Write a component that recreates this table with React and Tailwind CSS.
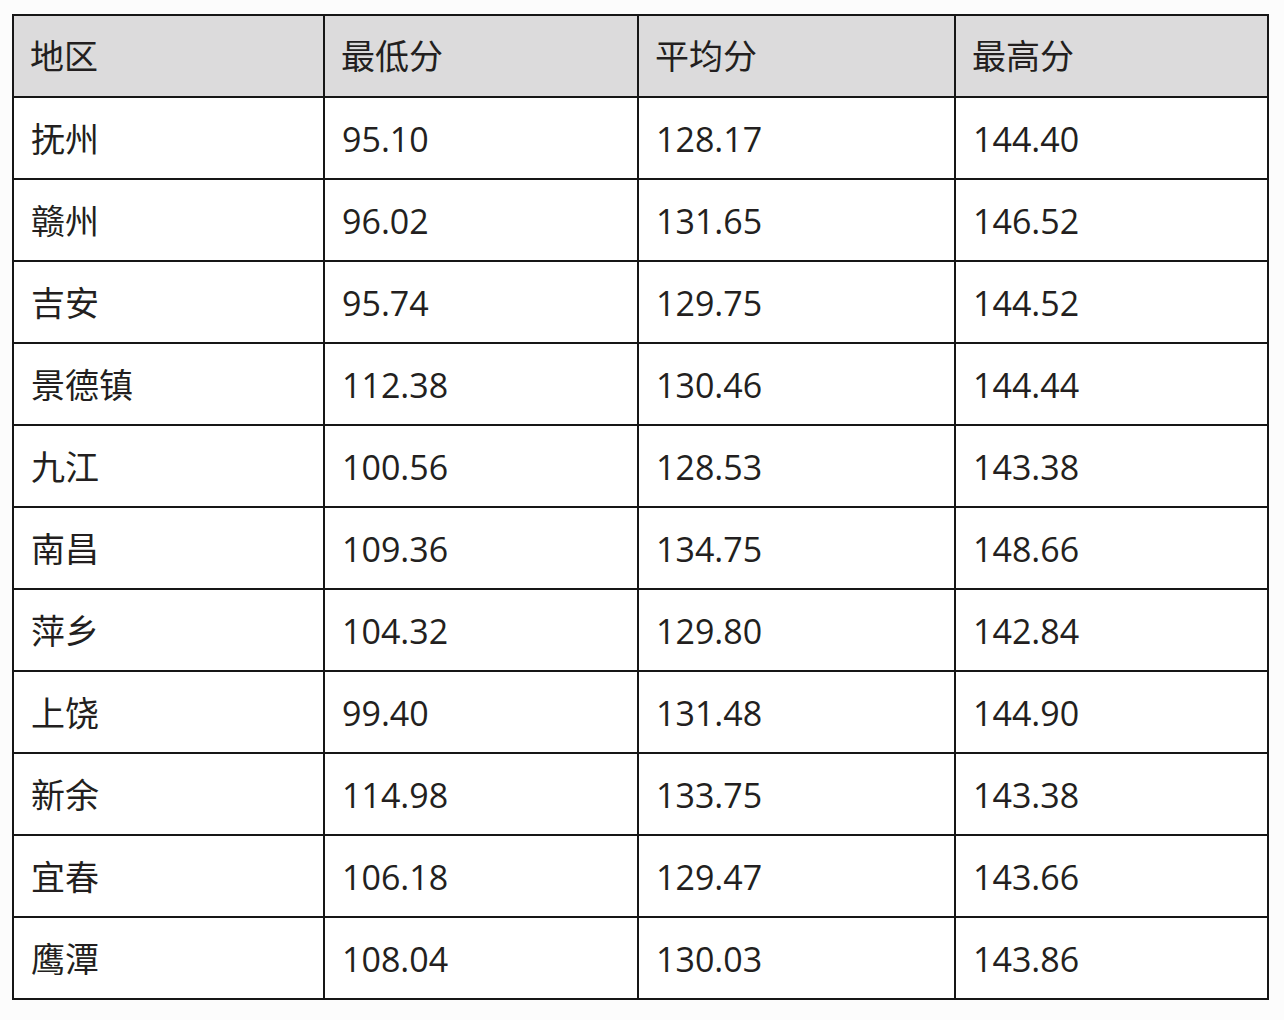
import React from 'react';

const rows = [
  ['抚州', '95.10', '128.17', '144.40'],
  ['赣州', '96.02', '131.65', '146.52'],
  ['吉安', '95.74', '129.75', '144.52'],
  ['景德镇', '112.38', '130.46', '144.44'],
  ['九江', '100.56', '128.53', '143.38'],
  ['南昌', '109.36', '134.75', '148.66'],
  ['萍乡', '104.32', '129.80', '142.84'],
  ['上饶', '99.40', '131.48', '144.90'],
  ['新余', '114.98', '133.75', '143.38'],
  ['宜春', '106.18', '129.47', '143.66'],
  ['鹰潭', '108.04', '130.03', '143.86'],
];

const header = ['地区', '最低分', '平均分', '最高分'];

export default function App() {
  return (
    <div className="w-[1284px] h-[1020px] bg-[#fcfcfc] pt-[14px] pl-[12px]"
      style={{ fontFamily: '"Open Sans", "Noto Sans CJK SC", sans-serif' }}>
      <div className="inline-grid grid-cols-[309px_312px_315px_311px] auto-rows-[80px] gap-[2px] p-[2px] bg-[#161616] text-[34px] text-[#231f20]">
        {header.map((h) => (
          <div key={h} className="bg-[#dcdbdc] flex items-center pl-[16px]">
            {h}
          </div>
        ))}
        {rows.map((r) =>
          r.map((c, i) => (
            <div key={r[0] + i} className="bg-white flex items-center pl-[17px] pt-[2px]">
              {c}
            </div>
          ))
        )}
      </div>
    </div>
  );
}
